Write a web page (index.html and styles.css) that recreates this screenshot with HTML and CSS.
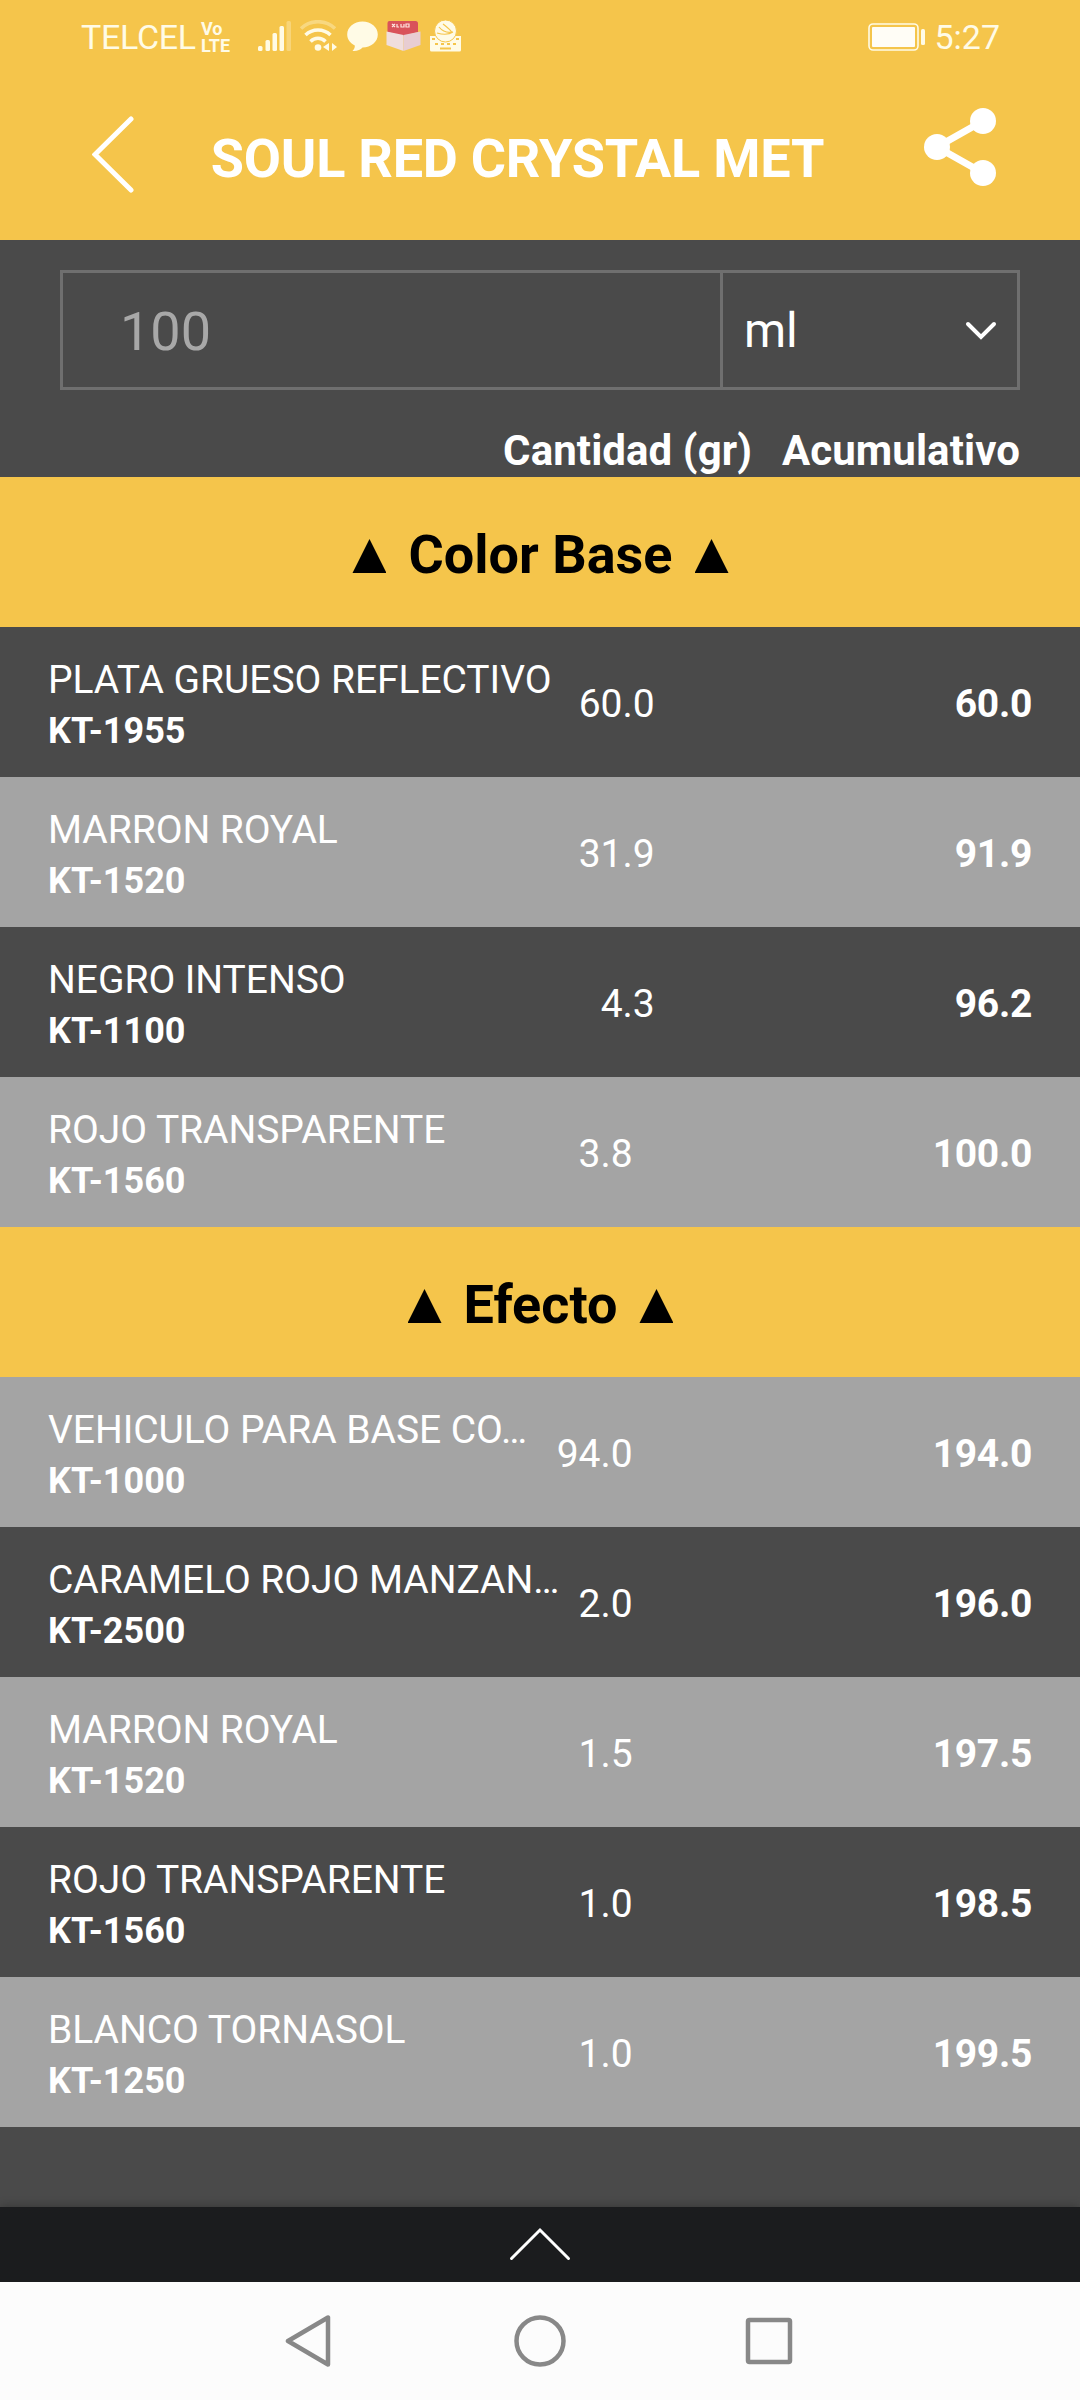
FILE: index.html
```html
<!DOCTYPE html>
<html lang="es">
<head>
    <meta charset="UTF-8">
    <meta name="viewport" content="width=device-width, initial-scale=1.0">
    <title>Soul Red Crystal Met</title>
    <link rel="stylesheet" href="styles.css">
</head>
<body>
    <header class="header">
        <div class="status-bar">
            <span class="carrier">TELCEL</span>
            <span class="volte"><span>Vo</span><span>LTE</span></span>
            <svg class="status-icons" width="210" height="34" viewBox="0 0 210 34">
                <!-- signal -->
                <g fill="#fffbe6">
                    <rect x="0" y="26" width="4.500" height="5" rx="1.500"/>
                    <rect x="7.500" y="20" width="4.500" height="11" rx="1.500"/>
                    <rect x="14.500" y="13" width="4.500" height="18" rx="1.500"/>
                    <rect x="21.500" y="6" width="4.500" height="25" rx="1.500"/>
                    <rect x="28.500" y="1" width="4.500" height="30" rx="1.500" opacity=".3"/>
                </g>
                <!-- wifi -->
                <g fill="none" stroke="#fffbe6" stroke-width="3.500">
                    <path d="M43 8.500a24.500 24.500 0 0 1 34 0" opacity=".35"/>
                    <path d="M47.500 15a18 18 0 0 1 25 0"/>
                    <path d="M52.500 21.500a10.500 10.500 0 0 1 15 0"/>
                </g>
                <circle cx="60" cy="27.500" r="3.300" fill="#fffbe6"/>
                <path d="M71 23v8l-6-4zM74 23v8l5-4z" fill="#fffbe6"/>
                <!-- message -->
                <path d="M104.500 1.500c8.500 0 15.300 5.600 15.300 13s-6.800 13-15.300 13c-2 2.500-6 4-10 3.500 1.500-1.500 2.500-3.500 2.300-5.500-4.500-2.500-7.600-6-7.600-11 0-7.400 6.800-13 15.300-13z" fill="#fffbe6"/>
                <!-- box -->
                <path d="M131.500 1h26q2.500 0 2.500 2.500V12l-14.500 4L129.500 12V3q0-2 2-2z" fill="#d9535a"/>
                <path d="M128.500 11.500l17 3.500v16l-17-6z" fill="#f0dedd"/>
                <path d="M162.500 11.500l-17 3.500v16l17-6z" fill="#e8cdd2"/>
                <path d="M134 4l3 3M137 4l-3 3M139 4v3h2M143 4v3h3V4M148 4v3h3V4z" fill="none" stroke="#ffe5df" stroke-width="1.200"/>
                <!-- keyboard -->
                <path d="M172 16h31v14q0 1.500-1.500 1.500h-28q-1.500 0-1.500-1.500z" fill="#fffbe6"/>
                <circle cx="187.500" cy="11" r="11" fill="#fffbe6" stroke="#f5c54b"/>
                <path d="M179 13c7 2 13 1 16-1M181 7c4 5 9 6 14 5M185 4c4 3 8 6 9 9" fill="none" stroke="#f5c54b" stroke-width="1.200"/>
                <path d="M174 19h3M198 19h3M177 24h3M183 24h3M189 24h3M195 24h3M182 28.500h11" stroke="#f5c54b" stroke-width="2"/>
            </svg>
            <svg class="battery" width="60" height="28" viewBox="0 0 60 28">
                <rect x="1" y="1" width="49" height="26" rx="4" fill="none" stroke="#fffbe6" stroke-width="1.600"/>
                <rect x="4" y="4" width="43" height="20" rx="1" fill="#fffdf6"/>
                <rect x="53" y="6" width="4" height="16" rx="1.500" fill="#fffbe6"/>
            </svg>
            <span class="clock">5:27</span>
        </div>
        <div class="title-bar">
            <svg class="back" width="44" height="78" viewBox="0 0 44 78">
                <path d="M39 4L3 39.500L39 75"/>
            </svg>
            <h1>SOUL RED CRYSTAL MET</h1>
            <svg class="share" width="72" height="78" viewBox="0 0 72 78">
                <path d="M59 13L13 39L59 65"/>
                <circle cx="59" cy="13" r="13"/>
                <circle cx="13" cy="39" r="13"/>
                <circle cx="59" cy="65" r="13"/>
            </svg>
        </div>
    </header>

    <main>
        <div class="quantity">
            <div class="amount">100</div>
            <div class="unit">
                <span>ml</span>
                <svg width="32" height="20" viewBox="0 0 32 20">
                    <path d="M3 3L16 16L29 3"/>
                </svg>
            </div>
        </div>
        <div class="columns">
            <span>Cantidad (gr)</span>
            <span>Acumulativo</span>
        </div>

        <h2 class="section"><i class="triangle"></i>Color Base<i class="triangle"></i></h2>
        <div class="row">
            <div class="color"><div class="name">PLATA GRUESO REFLECTIVO</div><div class="code">KT-1955</div></div>
            <span class="grams">60.0</span><span class="total">60.0</span>
        </div>
        <div class="row light">
            <div class="color"><div class="name">MARRON ROYAL</div><div class="code">KT-1520</div></div>
            <span class="grams">31.9</span><span class="total">91.9</span>
        </div>
        <div class="row">
            <div class="color"><div class="name">NEGRO INTENSO</div><div class="code">KT-1100</div></div>
            <span class="grams">4.3</span><span class="total">96.2</span>
        </div>
        <div class="row light">
            <div class="color"><div class="name">ROJO TRANSPARENTE</div><div class="code">KT-1560</div></div>
            <span class="grams">3.8</span><span class="total">100.0</span>
        </div>

        <h2 class="section"><i class="triangle"></i>Efecto<i class="triangle"></i></h2>
        <div class="row light">
            <div class="color"><div class="name">VEHICULO PARA BASE CO…</div><div class="code">KT-1000</div></div>
            <span class="grams">94.0</span><span class="total">194.0</span>
        </div>
        <div class="row">
            <div class="color"><div class="name">CARAMELO ROJO MANZAN…</div><div class="code">KT-2500</div></div>
            <span class="grams">2.0</span><span class="total">196.0</span>
        </div>
        <div class="row light">
            <div class="color"><div class="name">MARRON ROYAL</div><div class="code">KT-1520</div></div>
            <span class="grams">1.5</span><span class="total">197.5</span>
        </div>
        <div class="row">
            <div class="color"><div class="name">ROJO TRANSPARENTE</div><div class="code">KT-1560</div></div>
            <span class="grams">1.0</span><span class="total">198.5</span>
        </div>
        <div class="row light">
            <div class="color"><div class="name">BLANCO TORNASOL</div><div class="code">KT-1250</div></div>
            <span class="grams">1.0</span><span class="total">199.5</span>
        </div>
    </main>

    <div class="drawer">
        <svg width="64" height="36" viewBox="0 0 64 36">
            <path d="M3.500 32.500L32 4L60.500 32.500"/>
        </svg>
    </div>
    <nav class="nav-bar">
        <svg width="52" height="56" viewBox="0 0 52 56">
            <path d="M43 4.500V51.500L3 28z"/>
        </svg>
        <svg width="52" height="56" viewBox="0 0 52 56">
            <circle cx="26" cy="28" r="23.500"/>
        </svg>
        <svg width="52" height="56" viewBox="0 0 52 56">
            <rect x="5" y="7" width="42" height="42" rx="1.500"/>
        </svg>
    </nav>
</body>
</html>
```
FILE: styles.css
```css
* {
    box-sizing: border-box;
}

body {
    margin: 0;
    width: 1080px;
    height: 2400px;
    display: flex;
    flex-direction: column;
    font-family: Roboto, sans-serif;
    background-color: #4a4a4a;
    color: #fff;
}

svg {
    display: block;
    flex: none;
}

.header {
    height: 240px;
    background-color: #f5c54b;
}

.status-bar {
    display: flex;
    align-items: center;
    height: 74px;
    padding: 0 80px 0 81px;
    color: #fffbe6;
    font-size: 34px;
}

.carrier {
    width: 120px;
    letter-spacing: -0.3px;
}

.volte {
    display: flex;
    flex-direction: column;
    width: 57px;
    font-size: 18px;
    font-weight: bold;
    line-height: 17px;
}

.battery {
    margin-left: auto;
    margin-right: 6px;
}

.title-bar {
    display: flex;
    align-items: flex-start;
    padding: 34px 84px 0 92px;
}

.title-bar h1 {
    flex: 1;
    margin: 16px 0 0;
    padding-right: 25px;
    text-align: center;
    font-size: 54px;
    line-height: 70px;
    letter-spacing: -0.25px;
    white-space: nowrap;
}

.back {
    margin-top: 7px;
    fill: none;
    stroke: #fff;
    stroke-width: 5;
    stroke-linecap: round;
}

.share {
    fill: #fff;
}

.share path {
    fill: none;
    stroke: #fff;
    stroke-width: 7;
}

main {
    flex: 1;
}

.quantity {
    display: flex;
    height: 120px;
    margin: 30px 60px 0;
    border: 3px solid #6f6f6f;
}

.amount {
    width: 657px;
    padding-left: 57px;
    color: #a8a8a8;
    font-size: 54px;
    line-height: 118px;
}

.unit {
    flex: 1;
    display: flex;
    align-items: center;
    justify-content: space-between;
    padding: 1px 20px 0 21px;
    border-left: 3px solid #6f6f6f;
    font-size: 48px;
}

.unit path {
    fill: none;
    stroke: #fff;
    stroke-width: 4;
    stroke-linecap: round;
}

.columns {
    display: flex;
    justify-content: flex-end;
    gap: 30px;
    height: 87px;
    padding: 36px 60px 0;
    font-size: 42px;
    font-weight: bold;
    line-height: 50px;
    letter-spacing: 0.08px;
}

.section {
    display: flex;
    align-items: center;
    justify-content: center;
    gap: 22px;
    height: 150px;
    margin: 0;
    padding: 5px 0 0 1px;
    background-color: #f5c54b;
    color: #000;
    font-size: 54px;
}

.triangle {
    width: 34px;
    height: 34px;
    margin-top: 3px;
    background-color: #000;
    clip-path: polygon(50% 0, 100% 100%, 0 100%);
}

.row {
    display: flex;
    align-items: center;
    height: 150px;
    padding: 6px 48px 0;
    font-size: 39px;
}

.row.light {
    background-color: #a4a4a4;
}

.color {
    flex: 1;
    min-width: 0;
    white-space: nowrap;
}

.name {
    line-height: 52px;
    letter-spacing: -0.05px;
}

.code {
    font-size: 36px;
    font-weight: bold;
    line-height: 50px;
}

.grams {
    margin-right: 300px;
    margin-top: -3px;
}

.total {
    margin-top: -3px;
    font-weight: bold;
    letter-spacing: -0.3px;
}

.drawer {
    display: flex;
    justify-content: center;
    height: 75px;
    padding-top: 19px;
    background-color: #1b1c1e;
    box-shadow: 0 0 10px rgba(0, 0, 0, 0.3);
}

.drawer path {
    fill: none;
    stroke: #fff;
    stroke-width: 3;
    stroke-linecap: round;
}

.nav-bar {
    display: flex;
    justify-content: center;
    gap: 177px;
    height: 118px;
    padding-top: 31px;
    background-color: #fcfcfc;
    z-index: 1;
}

.nav-bar svg {
    fill: none;
    stroke: #888;
    stroke-width: 4.5;
    stroke-linejoin: round;
}
```
